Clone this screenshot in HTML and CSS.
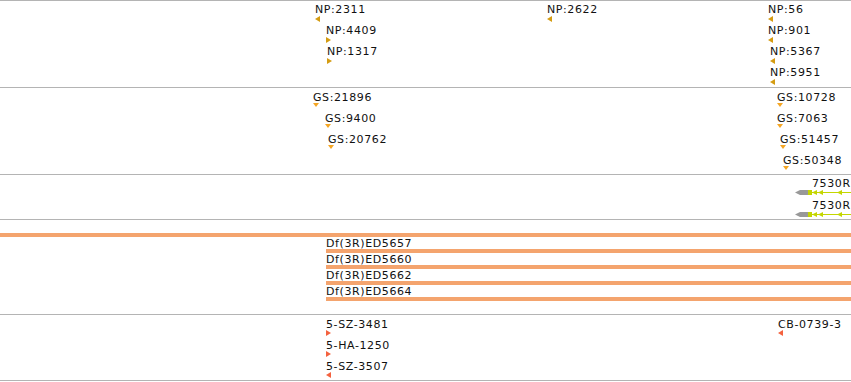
FILE: index.html
```html
<!DOCTYPE html>
<html>
<head>
<meta charset="utf-8">
<link rel="stylesheet" href="styles.css">
</head>
<body>
<div class="tracks">
  <div class="track t-np">
    <div class="feat" style="left:315px;top:1px"><div class="lbl">NP:2311</div><div class="tri tri-l"></div></div>
    <div class="feat" style="left:326px;top:22px"><div class="lbl">NP:4409</div><div class="tri tri-r"></div></div>
    <div class="feat" style="left:327px;top:43px"><div class="lbl">NP:1317</div><div class="tri tri-r"></div></div>
    <div class="feat" style="left:547px;top:1px"><div class="lbl">NP:2622</div><div class="tri tri-l"></div></div>
    <div class="feat" style="left:768px;top:1px"><div class="lbl">NP:56</div><div class="tri tri-l"></div></div>
    <div class="feat" style="left:768px;top:22px"><div class="lbl">NP:901</div><div class="tri tri-l"></div></div>
    <div class="feat" style="left:770px;top:43px"><div class="lbl">NP:5367</div><div class="tri tri-l"></div></div>
    <div class="feat" style="left:770px;top:64px"><div class="lbl">NP:5951</div><div class="tri tri-l"></div></div>
  </div>
  <div class="track t-gs">
    <div class="feat" style="left:313px;top:2px"><div class="lbl">GS:21896</div><div class="tri tri-d"></div></div>
    <div class="feat" style="left:325px;top:23px"><div class="lbl">GS:9400</div><div class="tri tri-d"></div></div>
    <div class="feat" style="left:328px;top:44px"><div class="lbl">GS:20762</div><div class="tri tri-d"></div></div>
    <div class="feat" style="left:777px;top:2px"><div class="lbl">GS:10728</div><div class="tri tri-d"></div></div>
    <div class="feat" style="left:777px;top:23px"><div class="lbl">GS:7063</div><div class="tri tri-d"></div></div>
    <div class="feat" style="left:780px;top:44px"><div class="lbl">GS:51457</div><div class="tri tri-d"></div></div>
    <div class="feat" style="left:783px;top:65px"><div class="lbl">GS:50348</div><div class="tri tri-d"></div></div>
  </div>
  <div class="track t-gene">
    <div class="gene" style="top:1px">
      <div class="lbl gene-lbl">7530R</div>
      <svg class="gene-glyph" width="58" height="6" viewBox="0 0 58 6">
        <polygon points="2,2.5 7,0 15,0 15,5 7,5" fill="#999999"/>
        <rect x="15" y="0" width="4" height="5" fill="#c4d600"/>
        <rect x="19" y="2" width="39" height="1" fill="#c4d600"/>
        <polygon points="19,2.5 24,0 24,5" fill="#c4d600"/>
        <polygon points="25,2.5 30,0 30,5" fill="#c4d600"/>
        <polygon points="44,2.5 49,0 49,5" fill="#c4d600"/>
      </svg>
    </div>
    <div class="gene" style="top:23px">
      <div class="lbl gene-lbl">7530R</div>
      <svg class="gene-glyph" width="58" height="6" viewBox="0 0 58 6">
        <polygon points="2,2.5 7,0 15,0 15,5 7,5" fill="#999999"/>
        <rect x="15" y="0" width="4" height="5" fill="#c4d600"/>
        <rect x="19" y="2" width="39" height="1" fill="#c4d600"/>
        <polygon points="19,2.5 24,0 24,5" fill="#c4d600"/>
        <polygon points="25,2.5 30,0 30,5" fill="#c4d600"/>
        <polygon points="44,2.5 49,0 49,5" fill="#c4d600"/>
      </svg>
    </div>
  </div>
  <div class="track t-del">
    <div class="fullbar"></div>
    <div class="drow" style="margin-left:326px"><div class="dlbl">Df(3R)ED5657</div><div class="dbar"></div></div>
    <div class="drow" style="margin-left:326px"><div class="dlbl">Df(3R)ED5660</div><div class="dbar"></div></div>
    <div class="drow" style="margin-left:326px"><div class="dlbl">Df(3R)ED5662</div><div class="dbar"></div></div>
    <div class="drow" style="margin-left:326px"><div class="dlbl">Df(3R)ED5664</div><div class="dbar"></div></div>
  </div>
  <div class="track t-sz">
    <div class="feat" style="left:326px;top:2px"><div class="lbl">5-SZ-3481</div><div class="tri tri-r"></div></div>
    <div class="feat" style="left:326px;top:23px"><div class="lbl">5-HA-1250</div><div class="tri tri-r"></div></div>
    <div class="feat" style="left:326px;top:44px"><div class="lbl">5-SZ-3507</div><div class="tri tri-l"></div></div>
    <div class="feat" style="left:778px;top:2px"><div class="lbl">CB-0739-3</div><div class="tri tri-l"></div></div>
  </div>
</div>
</body>
</html>
```

FILE: styles.css
```css
html, body {
  margin: 0;
  padding: 0;
  background: #ffffff;
}

body {
  width: 851px;
  height: 382px;
  overflow: hidden;
  font-family: "DejaVu Sans", "Liberation Sans", sans-serif;
  font-size: 11px;
  letter-spacing: 0.6px;
  color: #111111;
}

.tracks {
  border-top: 1px solid #b4b4b4;
}

.track {
  position: relative;
  overflow: hidden;
  border-bottom: 1px solid #b4b4b4;
}

.t-np { height: 86px; --c: #d49c12; }
.t-gs { height: 86px; --c: #f5a623; }
.t-gene { height: 44px; }
.t-del { height: 95px; display: flex; flex-direction: column; padding-top: 13px; box-sizing: border-box; }
.t-sz { height: 65px; --c: #f4623f; }

.feat {
  position: absolute;
  display: flex;
  flex-direction: column;
  align-items: flex-start;
}

.lbl {
  line-height: 15px;
  height: 13px;
  white-space: nowrap;
}

.tri {
  width: 0;
  height: 0;
}

.tri-l {
  margin-top: 1px;
  border-top: 3px solid transparent;
  border-bottom: 3px solid transparent;
  border-right: 5px solid var(--c);
}

.tri-r {
  margin-top: 1px;
  border-top: 3px solid transparent;
  border-bottom: 3px solid transparent;
  border-left: 5px solid var(--c);
}

.t-sz .tri-l, .t-sz .tri-r {
  margin-top: 0;
}

.tri-d {
  border-left: 3px solid transparent;
  border-right: 3px solid transparent;
  border-top: 4px solid var(--c);
}

.gene {
  position: absolute;
  left: 793px;
  width: 58px;
  height: 22px;
}

.gene-lbl {
  margin-left: 19px;
}

.gene-glyph {
  display: block;
  margin-top: 1px;
}

.fullbar {
  height: 4px;
  background: #f4a46e;
}

.drow {
  display: flex;
  flex-direction: column;
}

.dlbl {
  line-height: 14px;
  height: 12px;
  white-space: nowrap;
}

.dbar {
  height: 4px;
  background: #f4a46e;
}
```
